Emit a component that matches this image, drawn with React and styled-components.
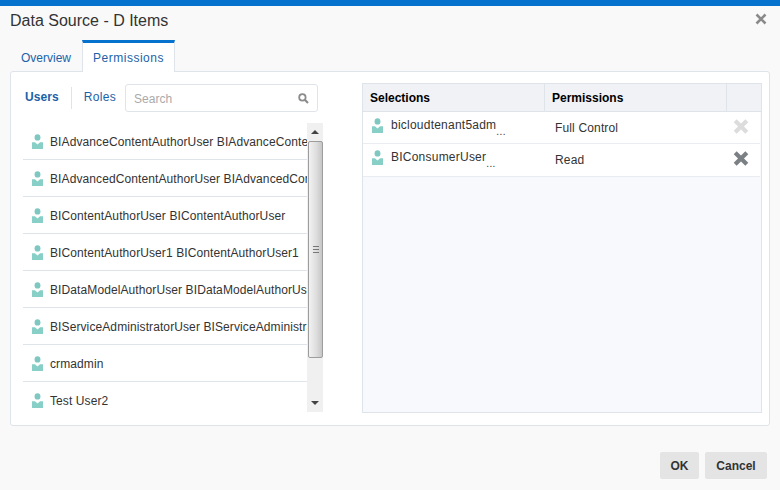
import React from 'react'
import styled, { createGlobalStyle } from 'styled-components'

const GlobalStyle = createGlobalStyle`
    html, body {
        margin: 0;
        padding: 0;
        background: #f9f9f9;
    }
    body {
        font-family: "Liberation Sans", Arial, sans-serif;
        font-size: 12px;
        color: #333;
    }
`

const Dialog = styled.div`
    width: 780px;
    height: 490px;
    box-sizing: border-box;
    border-top: 6px solid #0572ce;
    background: #f9f9f9;
    display: flex;
    flex-direction: column;
    overflow: hidden;
`

const Header = styled.div`
    height: 34px;
    flex: none;
    padding: 5px 13px 0 10px;
    box-sizing: border-box;
    display: flex;
    justify-content: space-between;
    align-items: flex-start;
`

const Title = styled.h1`
    margin: 0;
    font-size: 16px;
    line-height: 20px;
    font-weight: normal;
    color: #333;
`

const CloseIcon = styled.svg`
    width: 12px;
    height: 12px;
    margin-top: 2px;
`

const Tabs = styled.div`
    display: flex;
    flex: none;
    height: 32px;
    padding-left: 10px;
    position: relative;
    z-index: 1;
`

const Tab = styled.div`
    box-sizing: border-box;
    height: 32px;
    width: ${props => props.$active ? '93px' : '72px'};
    margin-bottom: -1px;
    display: flex;
    align-items: center;
    justify-content: center;
    font-size: 12px;
    color: #1b62a8;
    letter-spacing: ${props => props.$active ? '0.5px' : '0'};
    background: ${props => props.$active ? '#fff' : 'transparent'};
    border-top: ${props => props.$active ? '3px solid #0572ce' : '3px solid transparent'};
    border-left: ${props => props.$active ? '1px solid #dfe4ea' : 'none'};
    border-right: ${props => props.$active ? '1px solid #dfe4ea' : 'none'};
`

const Panel = styled.div`
    box-sizing: border-box;
    width: 760px;
    height: 355px;
    margin: -1px 0 0 10px;
    flex: none;
    background: #fff;
    border: 1px solid #dfe4ea;
    border-radius: 3px;
    display: flex;
    justify-content: space-between;
    padding: 12px 7px 12px 12px;
`

const Picker = styled.div`
    width: 300px;
    display: flex;
    flex-direction: column;
`

const PickerBar = styled.div`
    height: 28px;
    flex: none;
    display: flex;
    align-items: center;
    margin-bottom: 11px;
`

const PickerTab = styled.div`
    font-size: 12px;
    color: #1b62a8;
    font-weight: ${props => props.$active ? 'bold' : 'normal'};
    letter-spacing: ${props => props.$active ? '0.1px' : '0.3px'};
    padding-left: ${props => props.$active ? '2px' : '12px'};
    padding-right: ${props => props.$active ? '12px' : '9px'};
    height: 22px;
    line-height: 20px;
    box-sizing: border-box;
    border-right: ${props => props.$active ? '1px solid #dfe4ea' : 'none'};
`

const SearchBox = styled.div`
    box-sizing: border-box;
    width: 193px;
    height: 28px;
    border: 1px solid #dfe4ea;
    border-radius: 3px;
    display: flex;
    align-items: center;
    justify-content: space-between;
    padding: 1px 8px 0;
    color: #aaa;
    font-size: 12px;
`

const ListFrame = styled.div`
    display: flex;
    height: 289px;
`

const UserList = styled.div`
    width: 284px;
    overflow: hidden;
`

const UserRow = styled.div`
    box-sizing: border-box;
    height: 37px;
    padding: 1px 0 0 9px;
    display: flex;
    align-items: center;
    gap: 7px;
    border-bottom: 1px solid #dfe4ea;
    font-size: 12px;
    letter-spacing: 0.1px;
    white-space: nowrap;
    overflow: hidden;
    color: #333;
`

const UserIconSvg = styled.svg`
    width: 11px;
    height: 15px;
    flex: none;
`

const Scrollbar = styled.div`
    width: 16px;
    flex: none;
    background: #f0f0f0;
    display: flex;
    flex-direction: column;
    align-items: center;
`

const ScrollArrow = styled.div`
    height: 18px;
    flex: none;
    width: 100%;
    display: flex;
    align-items: center;
    justify-content: center;
    &::after {
        content: '';
        border-left: 4px solid transparent;
        border-right: 4px solid transparent;
        ${props => props.$down ? 'border-top: 4px solid #444;' : 'border-bottom: 4px solid #444;'}
    }
`

const ScrollThumb = styled.div`
    box-sizing: border-box;
    width: 15px;
    height: 217px;
    flex: none;
    margin-left: 1px;
    border: 1px solid #9d9d9d;
    border-radius: 2px;
    background: linear-gradient(to right, #f2f2f2, #dcdcdc 60%, #c6c6c6);
    display: flex;
    align-items: center;
    justify-content: center;
    &::after {
        content: '';
        width: 6px;
        height: 5px;
        border-top: 1px solid #777;
        border-bottom: 1px solid #777;
        background: linear-gradient(#777, #777) center / 100% 1px no-repeat;
    }
`

const ScrollTrack = styled.div`
    flex: 1;
`

const Table = styled.div`
    box-sizing: border-box;
    width: 400px;
    height: 330px;
    margin-top: -1px;
    border: 1px solid #dfe4ea;
    background: #f7f9fc;
    display: flex;
    flex-direction: column;
`

const HeadRow = styled.div`
    box-sizing: border-box;
    display: flex;
    height: 28px;
    flex: none;
    background: #f0f2f5;
    border-bottom: 1px solid #dfe4ea;
`

const HeadCell = styled.div`
    box-sizing: border-box;
    width: ${props => props.$w}px;
    display: flex;
    align-items: center;
    padding-left: 7px;
    font-size: 12px;
    font-weight: bold;
    color: #000;
    border-right: ${props => props.$last ? 'none' : '1px solid #dfe4ea'};
`

const BodyRow = styled.div`
    box-sizing: border-box;
    display: flex;
    height: ${props => props.$h}px;
    flex: none;
    background: #fff;
    border-bottom: 1px solid #e9edf1;
    margin-right: 1px;
`

const NameCell = styled.div`
    width: 182px;
    box-sizing: border-box;
    padding: 6px 0 0 9px;
    display: flex;
    align-items: flex-start;
    gap: 8px;
    font-size: 12px;
    letter-spacing: 0.23px;
    white-space: nowrap;
`

const Dots = styled.span`
    font-size: 10px;
    line-height: 10px;
    letter-spacing: 0.4px;
    margin: 9px 0 0 -8px;
    color: #333;
`

const PermCell = styled.div`
    width: 182px;
    box-sizing: border-box;
    padding: 9px 0 0 10px;
    font-size: 12px;
    line-height: 14px;
    letter-spacing: 0.15px;
`

const RemoveCell = styled.div`
    flex: 1;
    display: flex;
    justify-content: flex-end;
    padding: 7px 11px 0 0;
    align-items: flex-start;
`

const RemoveIcon = styled.svg`
    width: 16px;
    height: 15px;
`

const Footer = styled.div`
    flex: 1;
    display: flex;
    justify-content: flex-end;
    align-items: flex-start;
    gap: 6px;
    padding: 26px 13px 0 0;
`

const Button = styled.button`
    box-sizing: border-box;
    height: 27px;
    width: ${props => props.$w}px;
    padding: 0;
    border: none;
    border-radius: 2px;
    background: #e4e4e4;
    color: #333;
    font-family: inherit;
    font-size: 12px;
    font-weight: bold;
`

const UserIcon = () => (
    <UserIconSvg viewBox="0 0 12 15" preserveAspectRatio="none">
        <circle cx="6" cy="3.4" r="3.2" fill="#7fc8c2" />
        <path d="M0 15V8.2H3.2L6 10.6 8.8 8.2H12V15Z" fill="#88cfc8" />
    </UserIconSvg>
)

const Cross = ({ color }) => (
    <RemoveIcon viewBox="0 0 16 15">
        <path d="M2.2 1.8L13.8 13.2M13.8 1.8L2.2 13.2" stroke={color} strokeWidth="4.2" fill="none" />
    </RemoveIcon>
)

const users = [
    'BIAdvanceContentAuthorUser BIAdvanceContentAuthorUser',
    'BIAdvancedContentAuthorUser BIAdvancedContentAuthorUser',
    'BIContentAuthorUser BIContentAuthorUser',
    'BIContentAuthorUser1 BIContentAuthorUser1',
    'BIDataModelAuthorUser BIDataModelAuthorUser',
    'BIServiceAdministratorUser BIServiceAdministratorUser',
    'crmadmin',
    'Test User2',
]

const selections = [
    { name: 'bicloudtenant5adm', perm: 'Full Control', color: '#dcdcdc', h: 32 },
    { name: 'BIConsumerUser', perm: 'Read', color: '#7b8084', h: 33 },
]

export default function App() {
    return (
        <Dialog>
            <GlobalStyle />
            <Header>
                <Title>Data Source - D Items</Title>
                <CloseIcon viewBox="0 0 12 12">
                    <path d="M1.5 1.5L10.5 10.5M10.5 1.5L1.5 10.5" stroke="#8a8a8a" strokeWidth="2.6" fill="none" />
                </CloseIcon>
            </Header>
            <Tabs>
                <Tab>Overview</Tab>
                <Tab $active>Permissions</Tab>
            </Tabs>
            <Panel>
                <Picker>
                    <PickerBar>
                        <PickerTab $active>Users</PickerTab>
                        <PickerTab>Roles</PickerTab>
                        <SearchBox>
                            Search
                            <svg width="11" height="11" viewBox="0 0 11 11">
                                <circle cx="4.4" cy="4.4" r="3.2" stroke="#8c8c8c" strokeWidth="1.8" fill="none" />
                                <path d="M6.8 6.8L10 10" stroke="#8c8c8c" strokeWidth="2.2" />
                            </svg>
                        </SearchBox>
                    </PickerBar>
                    <ListFrame>
                        <UserList>
                            {users.map(u => (
                                <UserRow key={u}>
                                    <UserIcon />
                                    {u}
                                </UserRow>
                            ))}
                        </UserList>
                        <Scrollbar>
                            <ScrollArrow />
                            <ScrollThumb />
                            <ScrollTrack />
                            <ScrollArrow $down />
                        </Scrollbar>
                    </ListFrame>
                </Picker>
                <Table>
                    <HeadRow>
                        <HeadCell $w={182}>Selections</HeadCell>
                        <HeadCell $w={182}>Permissions</HeadCell>
                        <HeadCell $w={34} $last />
                    </HeadRow>
                    {selections.map(s => (
                        <BodyRow key={s.name} $h={s.h}>
                            <NameCell>
                                <UserIcon />
                                {s.name}
                                <Dots>...</Dots>
                            </NameCell>
                            <PermCell>{s.perm}</PermCell>
                            <RemoveCell>
                                <Cross color={s.color} />
                            </RemoveCell>
                        </BodyRow>
                    ))}
                </Table>
            </Panel>
            <Footer>
                <Button $w={39}>OK</Button>
                <Button $w={62}>Cancel</Button>
            </Footer>
        </Dialog>
    )
}
